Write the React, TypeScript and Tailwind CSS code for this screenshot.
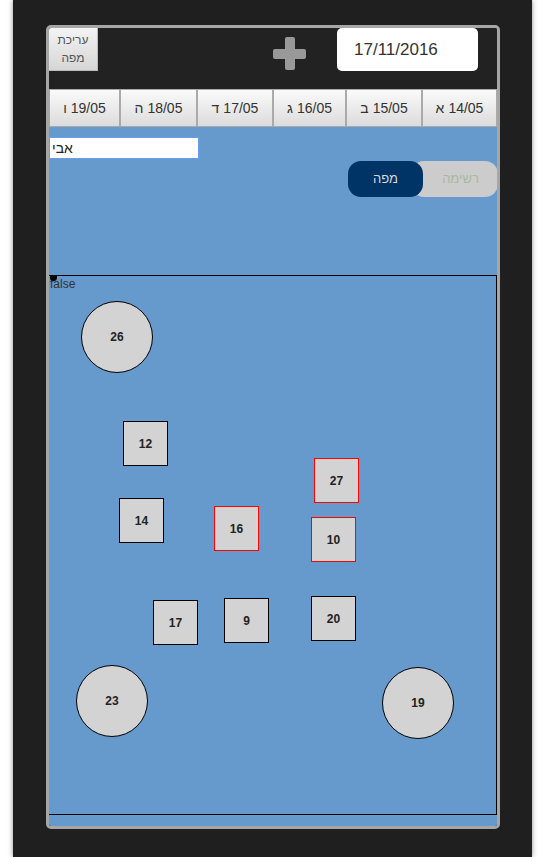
import React from 'react'

type Table = { n: number; x: number; y: number; round?: boolean; alert?: boolean }

// positions relative to the map's padding box (page x - 49, page y - 276)
const tables: Table[] = [
  { n: 26, x: 32, y: 25, round: true },
  { n: 12, x: 74, y: 145 },
  { n: 27, x: 265, y: 182, alert: true },
  { n: 14, x: 70, y: 222 },
  { n: 16, x: 165, y: 230, alert: true },
  { n: 10, x: 262, y: 241, alert: true },
  { n: 17, x: 104, y: 324 },
  { n: 9, x: 175, y: 322 },
  { n: 20, x: 262, y: 320 },
  { n: 23, x: 27, y: 389, round: true },
  { n: 19, x: 333, y: 391, round: true },
]

const days = [
  { date: '19/05', day: 'ו', w: 71 },
  { date: '18/05', day: 'ה', w: 77 },
  { date: '17/05', day: 'ד', w: 76 },
  { date: '16/05', day: 'ג', w: 73 },
  { date: '15/05', day: 'ב', w: 76 },
  { date: '14/05', day: 'א', w: 75 },
]

function TableItem({ t }: { t: Table }) {
  const base = 'absolute flex items-center justify-center bg-[#d3d3d3] text-[12px] font-bold text-[#222]'
  if (t.round) {
    return (
      <div
        className={`${base} w-[72px] h-[72px] rounded-full border border-black`}
        style={{ left: t.x, top: t.y }}
      >
        {t.n}
      </div>
    )
  }
  return (
    <div
      className={`${base} w-[45px] h-[45px] border ${t.alert ? 'border-[#ff0000]' : 'border-black'}`}
      style={{ left: t.x, top: t.y }}
    >
      {t.n}
    </div>
  )
}

export default function App() {
  return (
    <div className="min-h-[857px] bg-white pl-[13px] font-['Liberation_Sans',Arial,sans-serif]">
      <div className="w-[519px] h-[857px] bg-[#1f1f1f] pl-[33px] pt-[25px] shadow-[0_0_5px_rgba(0,0,0,0.45)]">
        <div className="w-[454px] h-[804px] border-[3px] border-[#a6a6a6] rounded-[5px] overflow-hidden flex flex-col">
          {/* header */}
          <div className="h-[61px] bg-[#222] flex items-start shrink-0">
            <button className="w-[49px] h-[43px] bg-gradient-to-b from-[#f4f4f4] to-[#d6d6d6] border-r border-b border-[#bbb] text-[12px] leading-[18px] text-[#555]">
              עריכת
              <br />
              מפה
            </button>
            <div className="ml-[175px] mt-[9px] w-[33px] h-[33px] relative">
              <div className="absolute left-[12px] top-0 w-[10px] h-[33px] rounded-[2px] bg-[#999]" />
              <div className="absolute left-0 top-[12px] w-[33px] h-[10px] rounded-[2px] bg-[#999]" />
            </div>
            <div className="ml-[31px] w-[141px] h-[43px] bg-white rounded-[5px] flex items-center pl-[17px] text-[17px] text-[#333]">
              17/11/2016
            </div>
          </div>

          {/* day tabs */}
          <div className="h-[38px] flex shrink-0 bg-[#222]">
            {days.map(d => (
              <div
                key={d.date}
                dir="ltr"
                className="h-full flex items-center justify-center gap-[4px] bg-gradient-to-b from-[#fafafa] to-[#dcdcdc] border border-[#aaa] text-[14px] text-[#333]"
                style={{ width: d.w }}
              >
                <span>{d.day}</span>
                <span>{d.date}</span>
              </div>
            ))}
          </div>

          {/* content */}
          <div className="flex-1 bg-[#6699cc] flex flex-col">
            <div className="pt-[10px]">
              <div className="w-[150px] h-[22px] bg-white border border-[#6c9cef] flex items-center pl-[2px] text-[14px] text-[#222]">
                <span dir="rtl">אבי</span>
              </div>
            </div>
            <div className="flex justify-end mt-[2px] -mr-[1px]">
              <div className="relative z-10 w-[75px] h-[36px] rounded-[13px] bg-[#003366] flex items-center justify-center text-[13px] text-[#d8d8d8]">
                מפה
              </div>
              <div className="-ml-[12px] w-[87px] h-[36px] rounded-[13px] bg-[#cccccc] flex items-center justify-center pl-[12px] text-[13px] text-[#a9b8a2]">
                רשימה
              </div>
            </div>

            {/* map */}
            <div className="mt-[78px] relative h-[540px] border border-black -ml-[1px]">
              <div className="absolute left-[1px] -top-[1px] w-[7px] h-[6px] rounded-b-full bg-black" />
              <div className="pl-[1px] pt-[1px] text-[12px] leading-[14px] text-[#333]">false</div>
              {tables.map(t => (
                <TableItem key={t.n} t={t} />
              ))}
            </div>
          </div>
        </div>
      </div>
    </div>
  )
}
